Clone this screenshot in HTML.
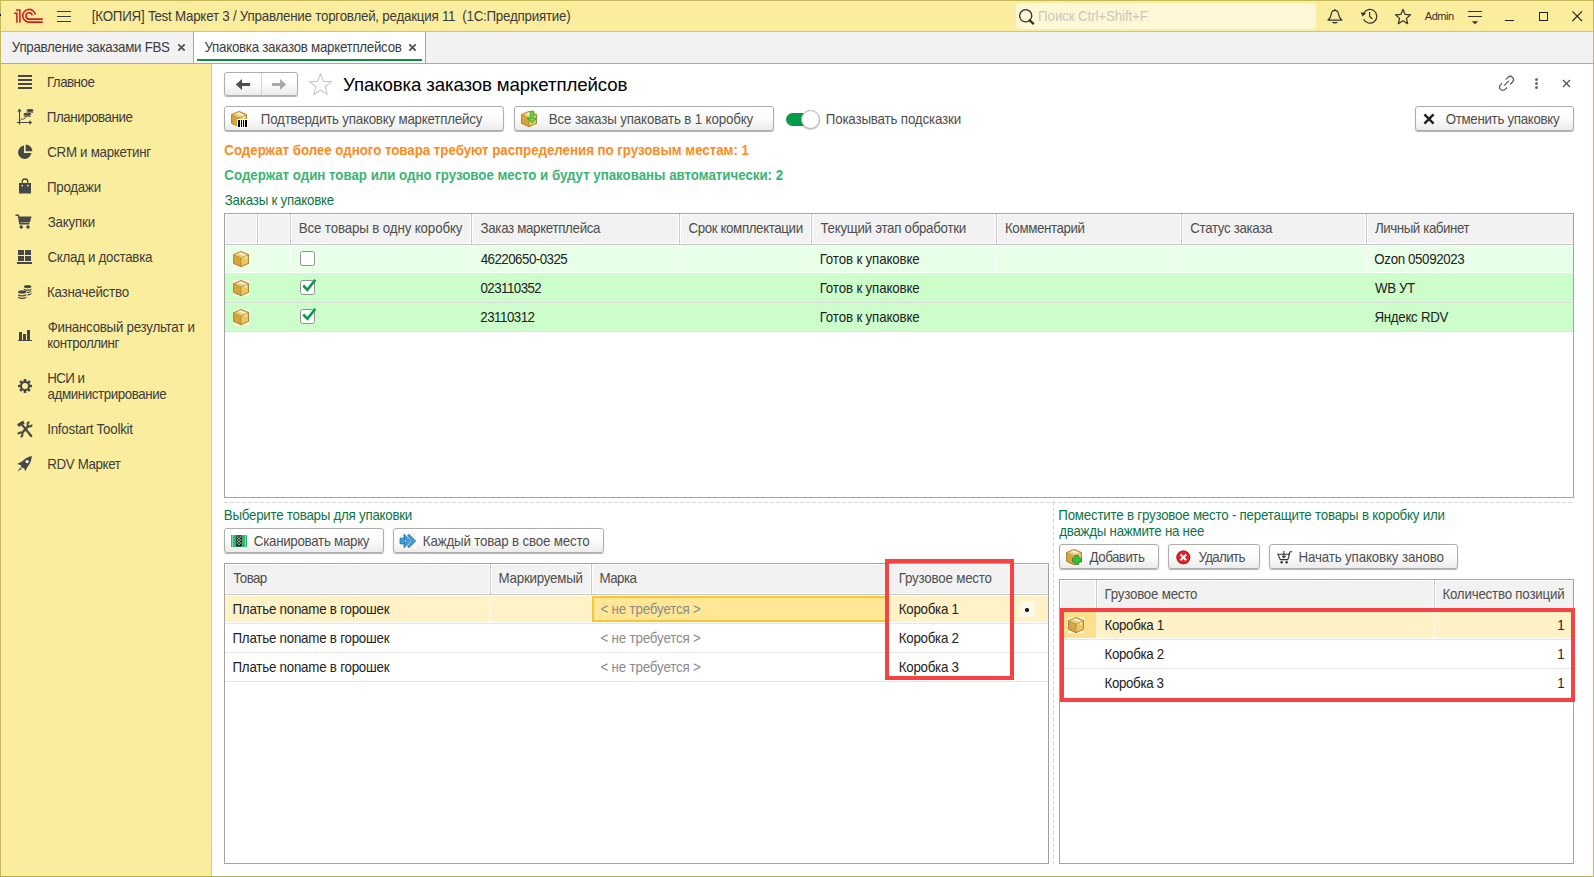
<!DOCTYPE html>
<html lang="ru"><head><meta charset="utf-8"><title>Упаковка заказов маркетплейсов</title>
<style>
*{box-sizing:border-box;margin:0;padding:0}
html,body{width:1594px;height:877px;overflow:hidden;background:#fff}
body{font-family:"Liberation Sans",Arial,sans-serif;font-size:13.33px;color:#333;position:relative}
.abs{position:absolute}
.t{position:absolute;white-space:pre;line-height:16px;height:16px;color:#3c3c3c;transform:scaleY(1.04);transform-origin:0 12.5px}
#frame{position:absolute;left:0;top:0;width:1594px;height:877px;border:1px solid #c4b75c;border-bottom-color:#b9ad52;pointer-events:none;z-index:50}
#titlebar{position:absolute;left:0;top:0;width:1594px;height:32px;background:#fbed9e}
#tabbar{position:absolute;left:0;top:32px;width:1594px;height:32px;background:#f2f2f2;border-bottom:1px solid #a9a9a9}
#sidebar{position:absolute;left:0;top:64px;width:212px;height:813px;background:#fbed9e;border-right:1px solid #d6ca7e}
.btn{position:absolute;height:25px;border:1px solid #adadad;border-radius:3px;background:linear-gradient(#ffffff 0%,#fdfdfd 45%,#ececec 100%);box-shadow:0 1px 1px rgba(0,0,0,.3)}
.grid{position:absolute;border:1px solid #a3a3a3;background:#fff}
.hd{position:absolute;background:#f2f2f2}
.h{color:#4e4e4e}
.g{color:#0b7446}
.gr{color:#8a8a8a}
.ic{position:absolute;overflow:visible}
</style></head><body>

<div id="titlebar"></div>
<div style="position:absolute;left:0px;top:31px;width:1594px;height:1px;background:#d2c574"></div>
<div style="position:absolute;left:0px;top:14.4px;width:1.2px;height:1.7px;background:#111;z-index:60"></div>
<svg class="ic" style="left:0;top:0" width="48" height="32" viewBox="0 0 48 32"><g fill="none" stroke="#d81a1f" stroke-width="1.55"><path d="M16.1 9.95 L19.85 9.95 L19.85 22.7"/><path d="M14.1 13.15 L16.9 13.15 L16.9 22.7"/><path d="M42.8 22.1 L29.1 22.1 A6.35 6.35 0 1 1 35.35 14.65"/><path d="M42.8 19.1 L29.1 19.1 A3.15 3.15 0 1 1 32.2 15.4"/></g></svg>
<div style="position:absolute;left:57px;top:10.75px;width:14px;height:1.4px;background:#3a3a3a"></div>
<div style="position:absolute;left:57px;top:15.7px;width:14px;height:1.4px;background:#3a3a3a"></div>
<div style="position:absolute;left:57px;top:20.7px;width:14px;height:1.4px;background:#3a3a3a"></div>
<div class="t" style="left:91.85px;letter-spacing:-0.223px;top:8.52px;color:#3a3a3a">[КОПИЯ] Test Маркет 3 / Управление торговлей, редакция 11  (1С:Предприятие)</div>
<div style="position:absolute;left:1016px;top:3px;width:300px;height:26px;background:#fff7d5;border-radius:3px"></div>
<svg class="ic" style="left:1018px;top:8px" width="18" height="18" viewBox="0 0 18 18"><circle cx="7.7" cy="7.8" r="6.1" fill="none" stroke="#2e2e2e" stroke-width="1.3"/><path d="M11.6 12.2 L15.2 15.6" stroke="#2e2e2e" stroke-width="2.2" stroke-linecap="round"/></svg>
<div class="t" style="left:1038.12px;letter-spacing:-0.113px;top:8.52px;color:#cbc8bd">Поиск Ctrl+Shift+F</div>
<svg class="ic" style="left:1327px;top:8px" width="16" height="18" viewBox="0 0 16 18"><path d="M1 12.2 C3.2 10.2 4 8.6 4.4 5.6 C4.7 3.3 6 2.3 7.9 2.3 C9.8 2.3 11.1 3.3 11.4 5.6 C11.8 8.6 12.6 10.2 14.9 12.2 Z" fill="none" stroke="#333" stroke-width="1.2" stroke-linejoin="round"/><circle cx="7.9" cy="1.7" r="0.8" fill="#333"/><path d="M4.6 13.9 L11.2 13.9 Q7.9 17.2 4.6 13.9 Z" fill="#333"/></svg>
<svg class="ic" style="left:1360px;top:8px" width="18" height="18" viewBox="0 0 18 18"><path d="M3.65 5.4 A6.9 6.9 0 1 1 3.65 11.2" fill="none" stroke="#333" stroke-width="1.2"/><path d="M2.5 8.4 L0.7 4.3 L6 5.2 Z" fill="#333"/><path d="M9.6 4 L9.6 8.4 L12.5 11" fill="none" stroke="#333" stroke-width="1.2"/></svg>
<svg class="ic" style="left:1394px;top:8px" width="18" height="17" viewBox="0 0 18 17"><path d="M9 1.3 L11.1 6.4 L16.6 6.8 L12.4 10.4 L13.7 15.7 L9 12.8 L4.3 15.7 L5.6 10.4 L1.4 6.8 L6.9 6.4 Z" fill="none" stroke="#333" stroke-width="1.2" stroke-linejoin="round"/></svg>
<div class="t" style="left:1424.78px;letter-spacing:-0.461px;top:9.02px;font-size:11px;line-height:14px;height:14px;transform:none;color:#333">Admin</div>
<div style="position:absolute;left:1467.8px;top:10.9px;width:14.4px;height:1.3px;background:#333"></div>
<div style="position:absolute;left:1467.8px;top:15.7px;width:14.4px;height:1.3px;background:#333"></div>
<svg class="ic" style="left:1471px;top:21px" width="8" height="4" viewBox="0 0 8 4"><path d="M0.8 0.2 L7.2 0.2 L4 3.2 Z" fill="#333"/></svg>
<div style="position:absolute;left:1505.2px;top:19.6px;width:9px;height:1.2px;background:#222"></div>
<div style="position:absolute;left:1539px;top:12px;width:9px;height:9px;border:1.3px solid #222"></div>
<svg class="ic" style="left:1572px;top:11px" width="11" height="11" viewBox="0 0 11 11"><path d="M0.4 0.4 L10 10 M10 0.4 L0.4 10" stroke="#222" stroke-width="1.1"/></svg>
<div id="tabbar"></div>
<div class="t" style="left:11.84px;letter-spacing:-0.286px;top:39.52px;">Управление заказами FBS</div>
<svg class="ic" style="left:177px;top:43px" width="9" height="9" viewBox="0 0 9 9"><path d="M1.3 1.3 L7.7 7.7 M7.7 1.3 L1.3 7.7" stroke="#4d4d4d" stroke-width="1.7"/></svg>
<div style="position:absolute;left:193px;top:32px;width:1px;height:31px;background:#a6a6a6"></div>
<div style="position:absolute;left:194px;top:32px;width:231px;height:31px;background:#fff"></div>
<div style="position:absolute;left:425px;top:32px;width:1px;height:31px;background:#a6a6a6"></div>
<div style="position:absolute;left:197px;top:59px;width:225px;height:2px;background:#0b9040"></div>
<div class="t" style="left:204.54px;letter-spacing:-0.281px;top:39.52px;">Упаковка заказов маркетплейсов</div>
<svg class="ic" style="left:408px;top:43px" width="9" height="9" viewBox="0 0 9 9"><path d="M1.3 1.3 L7.7 7.7 M7.7 1.3 L1.3 7.7" stroke="#4d4d4d" stroke-width="1.7"/></svg>
<div id="sidebar"></div>
<div class="t" style="left:46.91px;letter-spacing:-0.506px;top:74.52px;">Главное</div>
<div class="t" style="left:46.82px;letter-spacing:-0.444px;top:109.52px;">Планирование</div>
<div class="t" style="left:47.22px;letter-spacing:-0.289px;top:144.52px;">CRM и маркетинг</div>
<div class="t" style="left:47.02px;letter-spacing:-0.260px;top:179.52px;">Продажи</div>
<div class="t" style="left:47.66px;letter-spacing:-0.173px;top:214.52px;">Закупки</div>
<div class="t" style="left:47.42px;letter-spacing:-0.286px;top:249.52px;">Склад и доставка</div>
<div class="t" style="left:47.01px;letter-spacing:-0.225px;top:284.52px;">Казначейство</div>
<div class="t" style="left:47.63px;letter-spacing:-0.254px;top:319.52px;">Финансовый результат и</div>
<div class="t" style="left:47.20px;letter-spacing:-0.442px;top:335.52px;">контроллинг</div>
<div class="t" style="left:47.31px;letter-spacing:-0.590px;top:370.52px;">НСИ и</div>
<div class="t" style="left:47.53px;letter-spacing:-0.397px;top:386.52px;">администрирование</div>
<div class="t" style="left:47.17px;letter-spacing:-0.219px;top:421.52px;">Infostart Toolkit</div>
<div class="t" style="left:47.31px;letter-spacing:-0.373px;top:456.52px;">RDV Маркет</div>
<div style="position:absolute;left:18px;top:75px;width:14px;height:2px;background:#474747"></div>
<div style="position:absolute;left:18px;top:79px;width:14px;height:2px;background:#474747"></div>
<div style="position:absolute;left:18px;top:83px;width:14px;height:2px;background:#474747"></div>
<div style="position:absolute;left:18px;top:87px;width:14px;height:2px;background:#474747"></div>
<svg class="ic" style="left:16px;top:108px" width="18" height="18" viewBox="0 0 18 18"><g fill="none" stroke="#474747" stroke-width="1.15"><path d="M3.5 2 L3.5 16.6 M0.9 14.5 L14 14.5"/><path d="M4.6 12.3 L6.4 10.7 L7.6 11.2 L9.8 9.4" stroke-width="1"/></g><path d="M3.5 0.4 L5.7 3.4 L1.3 3.4 Z M16.3 14.5 L13.2 16.7 L13.2 12.3 Z" fill="#474747"/><g fill="#474747"><ellipse cx="14" cy="2.3" rx="3.4" ry="1.25"/><ellipse cx="14" cy="4.1" rx="3.4" ry="1.25"/><ellipse cx="11.3" cy="6" rx="3.8" ry="1.3"/><ellipse cx="11.3" cy="7.8" rx="3.8" ry="1.3"/></g><g fill="none" stroke="#fbed9e" stroke-width="0.55"><path d="M10.6 3.2 A3.4 1.25 0 0 0 17.4 3.2"/><path d="M7.5 6.9 A3.8 1.3 0 0 0 15.1 6.9"/><path d="M10.6 5 A3.4 1.25 0 0 0 12 5.1"/></g></svg>
<svg class="ic" style="left:17px;top:144px" width="16" height="16" viewBox="0 0 16 16"><path d="M7 1.6 A6.7 6.7 0 1 0 14.4 9 L7 9 Z" fill="#474747"/><path d="M8.6 0.6 A6.6 6.6 0 0 1 15.3 7.3 L8.6 7.3 Z" fill="#474747"/></svg>
<svg class="ic" style="left:18px;top:178px" width="14" height="16" viewBox="0 0 14 16"><path d="M1 5 L13 5 L13 15.5 L1 15.5 Z" fill="#474747"/><path d="M4.2 7.5 L4.2 3.8 A2.8 2.8 0 0 1 9.8 3.8 L9.8 7.5" fill="none" stroke="#474747" stroke-width="1.3"/><circle cx="4.2" cy="7.6" r="0.9" fill="#fbed9e"/><circle cx="9.8" cy="7.6" r="0.9" fill="#fbed9e"/></svg>
<svg class="ic" style="left:15.4px;top:214.4px" width="18" height="16" viewBox="0 0 18 16"><path d="M0.5 1.2 L3.4 1.2 L5 9.8 L14.4 9.8" fill="none" stroke="#474747" stroke-width="1.5"/><path d="M4 2.6 L16.6 2.6 L14.8 8.4 L5 8.4 Z" fill="#474747"/><circle cx="6.2" cy="13" r="1.7" fill="#474747"/><circle cx="13" cy="13" r="1.7" fill="#474747"/></svg>
<div style="position:absolute;left:18px;top:250.3px;width:6px;height:4.8px;background:#474747"></div>
<div style="position:absolute;left:25.3px;top:250.3px;width:6px;height:4.8px;background:#474747"></div>
<div style="position:absolute;left:18px;top:256.4px;width:6px;height:4.5px;background:#474747"></div>
<div style="position:absolute;left:25.3px;top:256.4px;width:6px;height:4.5px;background:#474747"></div>
<div style="position:absolute;left:17px;top:262px;width:15px;height:1.8px;background:#474747"></div>
<svg class="ic" style="left:17px;top:284px" width="16" height="16" viewBox="0 0 16 16"><g fill="#474747"><ellipse cx="10.6" cy="2.6" rx="3.8" ry="1.6"/><path d="M6.8 4 A3.8 1.6 0 0 0 14.4 4 L14.4 5.2 A3.8 1.6 0 0 1 6.8 5.2 Z"/><path d="M10 7.8 A3.8 1.6 0 0 0 14.4 6.4 L14.4 7.6 A3.8 1.6 0 0 1 10 9 Z"/><path d="M10.5 10.2 A3.8 1.6 0 0 0 14.4 8.8 L14.4 10 A3.8 1.6 0 0 1 10.5 11.4 Z"/><ellipse cx="5.2" cy="8" rx="4.2" ry="1.7"/><path d="M1 9.5 A4.2 1.7 0 0 0 9.4 9.5 L9.4 10.8 A4.2 1.7 0 0 1 1 10.8 Z"/><path d="M1 12 A4.2 1.7 0 0 0 9.4 12 L9.4 13.3 A4.2 1.7 0 0 1 1 13.3 Z"/></g></svg>
<div style="position:absolute;left:18px;top:339.8px;width:14px;height:1.3px;background:#474747"></div>
<div style="position:absolute;left:19px;top:332.2px;width:3px;height:8px;background:#474747"></div>
<div style="position:absolute;left:23.1px;top:334.2px;width:2.8px;height:6px;background:#474747"></div>
<div style="position:absolute;left:27px;top:330.1px;width:3px;height:10px;background:#474747"></div>
<svg class="ic" style="left:17px;top:377.9px" width="16" height="16" viewBox="0 0 16 16"><g transform="translate(8 8)"><g fill="#474747"><rect x="-1.35" y="-7" width="2.7" height="14" rx="0.5"/><rect x="-1.35" y="-7" width="2.7" height="14" rx="0.5" transform="rotate(45)"/><rect x="-1.35" y="-7" width="2.7" height="14" rx="0.5" transform="rotate(90)"/><rect x="-1.35" y="-7" width="2.7" height="14" rx="0.5" transform="rotate(135)"/><circle r="5"/></g><circle r="3" fill="#fbed9e"/></g></svg>
<svg class="ic" style="left:16px;top:420px" width="18" height="18" viewBox="0 0 18 18"><g stroke="#474747" fill="none"><path d="M6 4.6 L15.2 16" stroke-width="2.3" stroke-linecap="round"/><path d="M1.9 5.6 L7.9 2" stroke-width="3.3"/><path d="M12.4 6 L5.6 13.4" stroke-width="2.3"/><path d="M15.69 4.58 A2.1 2.1 0 1 1 13.42 2.31" stroke-width="1.9"/><path d="M2.31 14.42 A2.1 2.1 0 1 1 4.58 16.69" stroke-width="1.9"/></g></svg>
<svg class="ic" style="left:16px;top:455px" width="18" height="18" viewBox="0 0 18 18"><path d="M15.9 0.9 C12 1.6 8.4 3.6 6.4 6.2 L1.2 9 L5.2 10.2 L4.7 11.2 L6.9 13.4 L7.9 12.8 L9.2 16.2 L11.8 11.4 C14.2 8.8 15.6 5 15.9 0.9 Z" fill="#474747"/><path d="M4.4 12.4 L1.4 16.6 L5.8 13.8 Z" fill="#474747"/><circle cx="11.1" cy="6.6" r="1.6" fill="#fff"/></svg>
<div class="btn" style="left:224px;top:72px;width:74px;height:24px"></div>
<div style="position:absolute;left:261px;top:73px;width:1px;height:22px;background:#d2d2d2"></div>
<svg class="ic" style="left:235px;top:78px" width="16" height="13" viewBox="0 0 16 13"><path d="M0.8 6.5 L7 1.1 L7 5 L15.1 5 L15.1 8 L7 8 L7 11.9 Z" fill="#4f4f4f"/></svg>
<svg class="ic" style="left:271px;top:78px" width="16" height="13" viewBox="0 0 16 13"><path d="M15.2 6.5 L9 1.1 L9 5 L1 5 L1 8 L9 8 L9 11.9 Z" fill="#a9a9a9"/></svg>
<svg class="ic" style="left:308px;top:72px" width="25" height="24" viewBox="0 0 25 24"><path d="M12.5 2 L15.4 9.2 L23.2 9.8 L17.2 14.8 L19.1 22.4 L12.5 18.2 L5.9 22.4 L7.8 14.8 L1.8 9.8 L9.6 9.2 Z" fill="#fff" stroke="#c3c7cc" stroke-width="1.1" stroke-linejoin="miter"/></svg>
<div class="t" style="left:343.10px;letter-spacing:-0.118px;top:73.02px;font-size:18.67px;line-height:23px;height:23px;transform:none;color:#000">Упаковка заказов маркетплейсов</div>
<svg class="ic" style="left:1490px;top:70px" width="28" height="26" viewBox="0 0 28 26"><g fill="none" stroke="#5a5a5a" stroke-width="1.2"><path d="M15.7 9.6 L17.9 7.4 A3.25 3.25 0 0 1 22.5 12 L20 14.5"/><path d="M12.1 13.2 L10.5 14.8 A3.25 3.25 0 0 0 15.1 19.4 L17 17.5"/><path d="M14.1 15.7 L18.9 10.9"/></g></svg>
<div style="position:absolute;left:1535px;top:78px;width:3px;height:3px;background:#6a6a6a;border-radius:50%"></div>
<div style="position:absolute;left:1535px;top:82px;width:3px;height:3px;background:#6a6a6a;border-radius:50%"></div>
<div style="position:absolute;left:1535px;top:86px;width:3px;height:3px;background:#6a6a6a;border-radius:50%"></div>
<svg class="ic" style="left:1562px;top:79px" width="9" height="9" viewBox="0 0 9 9"><path d="M1 1 L8 8 M8 1 L1 8" stroke="#555" stroke-width="1.3"/></svg>
<div class="btn" style="left:224px;top:106px;width:280px"></div>
<svg class="abs" style="left:231px;top:111px" width="16" height="16" viewBox="0 0 16 16"><rect width="16" height="16" fill="#fdf4e4"/><path d="M0.6 3.6 L8 6.9 L8 15.7 L0.6 12.4 Z" fill="#d6a63e"/><path d="M15.5 3.6 L8 6.9 L8 15.7 L15.5 12.4 Z" fill="#ebc65c"/><path d="M8 0.4 L15.5 3.6 L8 6.9 L0.6 3.6 Z" fill="#efd27a"/><path d="M4.4 2 L6.4 1.1 L13.6 4.3 L11.6 5.3 Z" fill="#f8efd8"/><path d="M11.6 5.4 L13.6 4.5 L13.6 7 L12.6 8.1 L11.6 7.5 Z" fill="#f6ecd2"/><g fill="none" stroke="#8f6b1e" stroke-width="0.75" stroke-linejoin="round"><path d="M8 0.4 L15.5 3.6 L15.5 12.4 L8 15.7 L0.6 12.4 L0.6 3.6 Z"/><path d="M0.6 3.6 L8 6.9 L15.5 3.6 M8 6.9 L8 15.7" stroke-width="0.6" stroke="#a27c28"/></g></svg>
<div style="position:absolute;left:237px;top:119px;width:10.6px;height:9px;background:#fffdf6"></div>
<div style="position:absolute;left:238.1px;top:120px;width:1.8px;height:6.8px;background:#000"></div>
<div style="position:absolute;left:241px;top:120px;width:1px;height:6.8px;background:#000"></div>
<div style="position:absolute;left:243px;top:120px;width:1px;height:6.8px;background:#000"></div>
<div style="position:absolute;left:245.3px;top:120px;width:1.8px;height:6.8px;background:#000"></div>
<div class="t h" style="left:260.82px;letter-spacing:-0.214px;top:111.52px;">Подтвердить упаковку маркетплейсу</div>
<div class="btn" style="left:514px;top:106px;width:260px"></div>
<svg class="abs" style="left:521px;top:111px" width="16" height="16" viewBox="0 0 16 16"><rect width="16" height="16" fill="#fdf4e4"/><path d="M0.6 3.6 L8 6.9 L8 15.7 L0.6 12.4 Z" fill="#d6a63e"/><path d="M15.5 3.6 L8 6.9 L8 15.7 L15.5 12.4 Z" fill="#ebc65c"/><path d="M8 0.4 L15.5 3.6 L8 6.9 L0.6 3.6 Z" fill="#efd27a"/><path d="M4.4 2 L6.4 1.1 L13.6 4.3 L11.6 5.3 Z" fill="#f8efd8"/><path d="M11.6 5.4 L13.6 4.5 L13.6 7 L12.6 8.1 L11.6 7.5 Z" fill="#f6ecd2"/><g fill="none" stroke="#8f6b1e" stroke-width="0.75" stroke-linejoin="round"><path d="M8 0.4 L15.5 3.6 L15.5 12.4 L8 15.7 L0.6 12.4 L0.6 3.6 Z"/><path d="M0.6 3.6 L8 6.9 L15.5 3.6 M8 6.9 L8 15.7" stroke-width="0.6" stroke="#a27c28"/></g></svg>
<svg class="ic" style="left:526px;top:110px" width="12" height="14" viewBox="0 0 12 14"><path d="M4.3 1.2 L7.7 1.2 L7.7 8.4 L10.6 8.4 L6 12.6 L1.2 8.4 L4.3 8.4 Z" fill="#66d544" stroke="#2f9e22" stroke-width="0.8" stroke-linejoin="round"/></svg>
<div class="t h" style="left:548.81px;letter-spacing:-0.143px;top:111.52px;">Все заказы упаковать в 1 коробку</div>
<div style="position:absolute;left:786px;top:113px;width:28px;height:13px;background:#059a48;border-radius:6.5px"></div>
<div style="position:absolute;left:801.4px;top:110.2px;width:18.8px;height:18.8px;background:#fff;border:1px solid #b2b2b2;border-radius:50%;box-shadow:0 1px 1px rgba(0,0,0,.22)"></div>
<div class="t h" style="left:825.72px;letter-spacing:-0.159px;top:111.52px;">Показывать подсказки</div>
<div class="btn" style="left:1415px;top:106px;width:159px"></div>
<svg class="ic" style="left:1423px;top:113px" width="12" height="12" viewBox="0 0 12 12"><path d="M1.4 1.4 L10.6 10.6 M10.6 1.4 L1.4 10.6" stroke="#1e1e1e" stroke-width="2.4"/></svg>
<div class="t h" style="left:1445.67px;letter-spacing:-0.316px;top:111.52px;">Отменить упаковку</div>
<div class="t" style="left:224.35px;letter-spacing:-0.037px;top:142.52px;font-weight:bold;color:#ff8a1c">Содержат более одного товара требуют распределения по грузовым местам: 1</div>
<div class="t" style="left:224.35px;letter-spacing:-0.026px;top:167.52px;font-weight:bold;color:#3cb474">Содержат один товар или одно грузовое место и будут упакованы автоматически: 2</div>
<div class="t g" style="left:224.76px;letter-spacing:-0.213px;top:192.52px;">Заказы к упаковке</div>
<div class="grid" style="left:224px;top:213px;width:1350px;height:285px"></div>
<div style="position:absolute;left:226px;top:215px;width:1347px;height:28px;background:#f2f2f2"></div>
<div style="position:absolute;left:225px;top:244px;width:1348px;height:1px;background:#c6c6c6"></div>
<div style="position:absolute;left:256px;top:214px;width:3px;height:30px;background:#fff"></div>
<div style="position:absolute;left:257px;top:214px;width:1px;height:31px;background:#c9c9c9"></div>
<div style="position:absolute;left:289px;top:214px;width:3px;height:30px;background:#fff"></div>
<div style="position:absolute;left:290px;top:214px;width:1px;height:31px;background:#c9c9c9"></div>
<div style="position:absolute;left:470px;top:214px;width:3px;height:30px;background:#fff"></div>
<div style="position:absolute;left:471px;top:214px;width:1px;height:31px;background:#c9c9c9"></div>
<div style="position:absolute;left:678px;top:214px;width:3px;height:30px;background:#fff"></div>
<div style="position:absolute;left:679px;top:214px;width:1px;height:31px;background:#c9c9c9"></div>
<div style="position:absolute;left:810px;top:214px;width:3px;height:30px;background:#fff"></div>
<div style="position:absolute;left:811px;top:214px;width:1px;height:31px;background:#c9c9c9"></div>
<div style="position:absolute;left:995px;top:214px;width:3px;height:30px;background:#fff"></div>
<div style="position:absolute;left:996px;top:214px;width:1px;height:31px;background:#c9c9c9"></div>
<div style="position:absolute;left:1180px;top:214px;width:3px;height:30px;background:#fff"></div>
<div style="position:absolute;left:1181px;top:214px;width:1px;height:31px;background:#c9c9c9"></div>
<div style="position:absolute;left:1365px;top:214px;width:3px;height:30px;background:#fff"></div>
<div style="position:absolute;left:1366px;top:214px;width:1px;height:31px;background:#c9c9c9"></div>
<div style="position:absolute;left:225px;top:246px;width:1348px;height:26px;background:#e8ffe8"></div>
<div style="position:absolute;left:225px;top:274px;width:1348px;height:28px;background:#ccfdcb"></div>
<div style="position:absolute;left:225px;top:303px;width:1348px;height:28px;background:#ccfdcb"></div>
<div style="position:absolute;left:225px;top:273px;width:1348px;height:1px;background:#e9ece9"></div>
<div style="position:absolute;left:225px;top:302px;width:1348px;height:1px;background:#dcdedc"></div>
<div style="position:absolute;left:225px;top:331px;width:1348px;height:1px;background:#e2e2e2"></div>
<div style="position:absolute;left:257px;top:246px;width:1px;height:26px;background:#fcfffc"></div>
<div style="position:absolute;left:290px;top:246px;width:1px;height:26px;background:#fcfffc"></div>
<div style="position:absolute;left:471px;top:246px;width:1px;height:26px;background:#fcfffc"></div>
<div style="position:absolute;left:679px;top:246px;width:1px;height:26px;background:#fcfffc"></div>
<div style="position:absolute;left:811px;top:246px;width:1px;height:26px;background:#fcfffc"></div>
<div style="position:absolute;left:996px;top:246px;width:1px;height:26px;background:#fcfffc"></div>
<div style="position:absolute;left:1181px;top:246px;width:1px;height:26px;background:#fcfffc"></div>
<div style="position:absolute;left:1366px;top:246px;width:1px;height:26px;background:#fcfffc"></div>
<div class="t h" style="left:298.71px;letter-spacing:-0.136px;top:220.52px;">Все товары в одну коробку</div>
<div class="t h" style="left:480.56px;letter-spacing:-0.335px;top:220.52px;">Заказ маркетплейса</div>
<div class="t h" style="left:688.42px;letter-spacing:-0.382px;top:220.52px;">Срок комплектации</div>
<div class="t h" style="left:820.50px;letter-spacing:-0.290px;top:220.52px;">Текущий этап обработки</div>
<div class="t h" style="left:1005.01px;letter-spacing:-0.393px;top:220.52px;">Комментарий</div>
<div class="t h" style="left:1190.32px;letter-spacing:-0.349px;top:220.52px;">Статус заказа</div>
<div class="t h" style="left:1374.88px;letter-spacing:-0.418px;top:220.52px;">Личный кабинет</div>
<svg class="abs" style="left:233px;top:251px" width="16" height="16" viewBox="0 0 16 16"><rect width="16" height="16" fill="#fdf4e4"/><path d="M0.6 3.6 L8 6.9 L8 15.7 L0.6 12.4 Z" fill="#d6a63e"/><path d="M15.5 3.6 L8 6.9 L8 15.7 L15.5 12.4 Z" fill="#ebc65c"/><path d="M8 0.4 L15.5 3.6 L8 6.9 L0.6 3.6 Z" fill="#efd27a"/><path d="M4.4 2 L6.4 1.1 L13.6 4.3 L11.6 5.3 Z" fill="#f8efd8"/><path d="M11.6 5.4 L13.6 4.5 L13.6 7 L12.6 8.1 L11.6 7.5 Z" fill="#f6ecd2"/><g fill="none" stroke="#8f6b1e" stroke-width="0.75" stroke-linejoin="round"><path d="M8 0.4 L15.5 3.6 L15.5 12.4 L8 15.7 L0.6 12.4 L0.6 3.6 Z"/><path d="M0.6 3.6 L8 6.9 L15.5 3.6 M8 6.9 L8 15.7" stroke-width="0.6" stroke="#a27c28"/></g></svg>
<div style="position:absolute;left:300px;top:251px;width:15px;height:15px;background:#fff;border:1px solid #929292;border-radius:2.5px"></div>
<div class="t" style="left:480.69px;letter-spacing:-0.527px;top:251.52px;color:#222">46220650-0325</div>
<div class="t" style="left:819.71px;letter-spacing:-0.154px;top:251.52px;color:#222">Готов к упаковке</div>
<div class="t" style="left:1374.37px;letter-spacing:-0.378px;top:251.52px;color:#222">Ozon 05092023</div>
<svg class="abs" style="left:233px;top:280px" width="16" height="16" viewBox="0 0 16 16"><rect width="16" height="16" fill="#fdf4e4"/><path d="M0.6 3.6 L8 6.9 L8 15.7 L0.6 12.4 Z" fill="#d6a63e"/><path d="M15.5 3.6 L8 6.9 L8 15.7 L15.5 12.4 Z" fill="#ebc65c"/><path d="M8 0.4 L15.5 3.6 L8 6.9 L0.6 3.6 Z" fill="#efd27a"/><path d="M4.4 2 L6.4 1.1 L13.6 4.3 L11.6 5.3 Z" fill="#f8efd8"/><path d="M11.6 5.4 L13.6 4.5 L13.6 7 L12.6 8.1 L11.6 7.5 Z" fill="#f6ecd2"/><g fill="none" stroke="#8f6b1e" stroke-width="0.75" stroke-linejoin="round"><path d="M8 0.4 L15.5 3.6 L15.5 12.4 L8 15.7 L0.6 12.4 L0.6 3.6 Z"/><path d="M0.6 3.6 L8 6.9 L15.5 3.6 M8 6.9 L8 15.7" stroke-width="0.6" stroke="#a27c28"/></g></svg>
<div style="position:absolute;left:300px;top:280px;width:15px;height:15px;background:#fff;border:1px solid #929292;border-radius:2.5px"></div>
<svg class="ic" style="left:301px;top:276px" width="16" height="16" viewBox="0 0 16 16"><path d="M2.2 9.5 L6.4 13.8 L14.3 3.7" fill="none" stroke="#0b9a48" stroke-width="2.6" stroke-linejoin="miter"/></svg>
<div class="t" style="left:480.48px;letter-spacing:-0.554px;top:280.52px;color:#222">023110352</div>
<div class="t" style="left:819.71px;letter-spacing:-0.154px;top:280.52px;color:#222">Готов к упаковке</div>
<div class="t" style="left:1374.94px;letter-spacing:-0.379px;top:280.52px;color:#222">WB УТ</div>
<svg class="abs" style="left:233px;top:309px" width="16" height="16" viewBox="0 0 16 16"><rect width="16" height="16" fill="#fdf4e4"/><path d="M0.6 3.6 L8 6.9 L8 15.7 L0.6 12.4 Z" fill="#d6a63e"/><path d="M15.5 3.6 L8 6.9 L8 15.7 L15.5 12.4 Z" fill="#ebc65c"/><path d="M8 0.4 L15.5 3.6 L8 6.9 L0.6 3.6 Z" fill="#efd27a"/><path d="M4.4 2 L6.4 1.1 L13.6 4.3 L11.6 5.3 Z" fill="#f8efd8"/><path d="M11.6 5.4 L13.6 4.5 L13.6 7 L12.6 8.1 L11.6 7.5 Z" fill="#f6ecd2"/><g fill="none" stroke="#8f6b1e" stroke-width="0.75" stroke-linejoin="round"><path d="M8 0.4 L15.5 3.6 L15.5 12.4 L8 15.7 L0.6 12.4 L0.6 3.6 Z"/><path d="M0.6 3.6 L8 6.9 L15.5 3.6 M8 6.9 L8 15.7" stroke-width="0.6" stroke="#a27c28"/></g></svg>
<div style="position:absolute;left:300px;top:309px;width:15px;height:15px;background:#fff;border:1px solid #929292;border-radius:2.5px"></div>
<svg class="ic" style="left:301px;top:305px" width="16" height="16" viewBox="0 0 16 16"><path d="M2.2 9.5 L6.4 13.8 L14.3 3.7" fill="none" stroke="#0b9a48" stroke-width="2.6" stroke-linejoin="miter"/></svg>
<div class="t" style="left:480.33px;letter-spacing:-0.524px;top:309.52px;color:#222">23110312</div>
<div class="t" style="left:819.71px;letter-spacing:-0.154px;top:309.52px;color:#222">Готов к упаковке</div>
<div class="t" style="left:1374.38px;letter-spacing:-0.287px;top:309.52px;color:#222">Яндекс RDV</div>
<div style="position:absolute;left:224px;top:502px;width:1348px;height:1px;background:repeating-linear-gradient(90deg,#d6d6d6 0 4px,transparent 4px 6px)"></div>
<div style="position:absolute;left:1053px;top:501px;width:1px;height:363px;background:repeating-linear-gradient(180deg,#d6d6d6 0 4px,transparent 4px 6px)"></div>
<div class="t g" style="left:223.81px;letter-spacing:-0.248px;top:507.52px;">Выберите товары для упаковки</div>
<div class="btn" style="left:224px;top:528px;width:160px"></div>
<svg class="ic" style="left:231px;top:535px" width="16" height="12" viewBox="0 0 16 12"><rect x="0" y="0" width="16" height="12" fill="#2fb56c"/><g fill="#8fe0b2"><rect x="1.2" y="0" width="0.9" height="12"/><rect x="13.9" y="0" width="0.9" height="12"/></g><rect x="5.4" y="0.6" width="5.2" height="10.8" fill="#111"/><g fill="#fff"><rect x="6.2" y="1.4" width="1.2" height="1.2"/><rect x="8.6" y="1.4" width="1.2" height="1.2"/><rect x="7.4" y="2.9" width="1.2" height="1.2"/><rect x="6.2" y="4.4" width="1.2" height="1.2"/><rect x="8.6" y="4.4" width="1.2" height="1.2"/><rect x="7.4" y="5.9" width="1.2" height="1.2"/><rect x="6.2" y="7.4" width="1.2" height="1.2"/><rect x="8.6" y="7.4" width="1.2" height="1.2"/><rect x="7.4" y="8.9" width="1.2" height="1.2"/></g></svg>
<div class="t h" style="left:253.82px;letter-spacing:-0.283px;top:533.52px;">Сканировать марку</div>
<div class="btn" style="left:393px;top:528px;width:211px"></div>
<div style="position:absolute;left:400px;top:533px;width:16px;height:16px;background:#fdf6e6"></div>
<svg class="ic" style="left:399px;top:533px" width="18" height="16" viewBox="0 0 18 16"><g fill="#3aa0de" stroke="#1a6fb0" stroke-width="0.8" stroke-linejoin="round"><path d="M1 5.2 L5.6 5.2 L5.6 10.8 L1 10.8 Z"/><path d="M5 1.2 L11.6 8 L5 14.8 L5 11 L7.8 8 L5 5 Z" /><path d="M10 1.2 L16.6 8 L10 14.8 L8.6 13.2 L13.2 8 L8.6 2.8 Z"/></g></svg>
<div class="t h" style="left:422.81px;letter-spacing:-0.170px;top:533.52px;">Каждый товар в свое место</div>
<div class="grid" style="left:224px;top:563px;width:825px;height:301px"></div>
<div style="position:absolute;left:226px;top:565px;width:822px;height:28px;background:#f2f2f2"></div>
<div style="position:absolute;left:225px;top:594px;width:823px;height:1px;background:#c6c6c6"></div>
<div style="position:absolute;left:489px;top:564px;width:3px;height:30px;background:#fff"></div>
<div style="position:absolute;left:490px;top:564px;width:1px;height:31px;background:#c9c9c9"></div>
<div style="position:absolute;left:590px;top:564px;width:3px;height:30px;background:#fff"></div>
<div style="position:absolute;left:591px;top:564px;width:1px;height:31px;background:#c9c9c9"></div>
<div style="position:absolute;left:887px;top:564px;width:3px;height:30px;background:#fff"></div>
<div style="position:absolute;left:888px;top:564px;width:1px;height:31px;background:#c9c9c9"></div>
<div style="position:absolute;left:1009px;top:564px;width:3px;height:30px;background:#fff"></div>
<div style="position:absolute;left:1010px;top:564px;width:1px;height:31px;background:#c9c9c9"></div>
<div style="position:absolute;left:225px;top:596px;width:823px;height:26px;background:#fff2c6"></div>
<div style="position:absolute;left:490px;top:596px;width:1px;height:26px;background:#fffcee"></div>
<div style="position:absolute;left:591px;top:596px;width:1px;height:26px;background:#fffcee"></div>
<div style="position:absolute;left:888px;top:596px;width:1px;height:26px;background:#fffcee"></div>
<div style="position:absolute;left:1010px;top:596px;width:1px;height:26px;background:#fffcee"></div>
<div style="position:absolute;left:592px;top:596px;width:297px;height:26px;background:#ffe796;border:2px solid #f9c632"></div>
<div style="position:absolute;left:1019px;top:601px;width:16px;height:16px;background:#fdf9e8"></div>
<div style="position:absolute;left:1025.3px;top:608.2px;width:3.4px;height:3.4px;background:#111;border-radius:50%"></div>
<div style="position:absolute;left:225px;top:623px;width:823px;height:1px;background:#e3e5e6"></div>
<div style="position:absolute;left:225px;top:652px;width:823px;height:1px;background:#e3e5e6"></div>
<div style="position:absolute;left:225px;top:681px;width:823px;height:1px;background:#e3e5e6"></div>
<div class="t h" style="left:233.30px;letter-spacing:-0.577px;top:570.52px;">Товар</div>
<div class="t h" style="left:498.51px;letter-spacing:-0.221px;top:570.52px;">Маркируемый</div>
<div class="t h" style="left:599.41px;letter-spacing:-0.530px;top:570.52px;">Марка</div>
<div class="t h" style="left:898.81px;letter-spacing:-0.206px;top:570.52px;">Грузовое место</div>
<div class="t" style="left:232.52px;letter-spacing:-0.228px;top:601.52px;color:#222">Платье noname в горошек</div>
<div class="t gr" style="left:600.44px;letter-spacing:-0.165px;top:601.52px;">&lt; не требуется &gt;</div>
<div class="t" style="left:898.81px;letter-spacing:-0.268px;top:601.52px;color:#222">Коробка 1</div>
<div class="t" style="left:232.52px;letter-spacing:-0.228px;top:630.52px;color:#222">Платье noname в горошек</div>
<div class="t gr" style="left:600.44px;letter-spacing:-0.165px;top:630.52px;">&lt; не требуется &gt;</div>
<div class="t" style="left:898.81px;letter-spacing:-0.265px;top:630.52px;color:#222">Коробка 2</div>
<div class="t" style="left:232.52px;letter-spacing:-0.228px;top:659.52px;color:#222">Платье noname в горошек</div>
<div class="t gr" style="left:600.44px;letter-spacing:-0.165px;top:659.52px;">&lt; не требуется &gt;</div>
<div class="t" style="left:898.81px;letter-spacing:-0.276px;top:659.52px;color:#222">Коробка 3</div>
<div style="position:absolute;left:885px;top:559px;width:129.3px;height:121px;border:4px solid #f64242"></div>
<div class="t g" style="left:1058.32px;letter-spacing:-0.221px;top:507.52px;">Поместите в грузовое место - перетащите товары в коробку или</div>
<div class="t g" style="left:1059.27px;letter-spacing:-0.255px;top:523.52px;">дважды нажмите на нее</div>
<div class="btn" style="left:1059px;top:544px;width:100px"></div>
<svg class="abs" style="left:1066px;top:549px" width="16" height="16" viewBox="0 0 16 16"><rect width="16" height="16" fill="#fdf4e4"/><path d="M0.6 3.6 L8 6.9 L8 15.7 L0.6 12.4 Z" fill="#d6a63e"/><path d="M15.5 3.6 L8 6.9 L8 15.7 L15.5 12.4 Z" fill="#ebc65c"/><path d="M8 0.4 L15.5 3.6 L8 6.9 L0.6 3.6 Z" fill="#efd27a"/><path d="M4.4 2 L6.4 1.1 L13.6 4.3 L11.6 5.3 Z" fill="#f8efd8"/><path d="M11.6 5.4 L13.6 4.5 L13.6 7 L12.6 8.1 L11.6 7.5 Z" fill="#f6ecd2"/><g fill="none" stroke="#8f6b1e" stroke-width="0.75" stroke-linejoin="round"><path d="M8 0.4 L15.5 3.6 L15.5 12.4 L8 15.7 L0.6 12.4 L0.6 3.6 Z"/><path d="M0.6 3.6 L8 6.9 L15.5 3.6 M8 6.9 L8 15.7" stroke-width="0.6" stroke="#a27c28"/></g></svg>
<svg class="ic" style="left:1072.4px;top:555px" width="10" height="10" viewBox="0 0 10 10"><path d="M3.2 0.5 L6.8 0.5 L6.8 3.2 L9.5 3.2 L9.5 6.8 L6.8 6.8 L6.8 9.5 L3.2 9.5 L3.2 6.8 L0.5 6.8 L0.5 3.2 L3.2 3.2 Z" fill="#2cc53b" stroke="#14802a" stroke-width="0.7"/></svg>
<div class="t h" style="left:1089.60px;letter-spacing:-0.523px;top:549.52px;">Добавить</div>
<div class="btn" style="left:1168px;top:544px;width:92px"></div>
<svg class="ic" style="left:1175.8px;top:549.5px" width="14.7" height="14.7" viewBox="0 0 14 14"><circle cx="7" cy="7" r="6.6" fill="#e0252a"/><circle cx="7" cy="7" r="6.1" fill="none" stroke="#b51419" stroke-width="0.8"/><path d="M4.3 4.3 L9.7 9.7 M9.7 4.3 L4.3 9.7" stroke="#fff" stroke-width="1.9"/></svg>
<div class="t h" style="left:1198.44px;letter-spacing:-0.647px;top:549.52px;">Удалить</div>
<div class="btn" style="left:1269px;top:544px;width:189px"></div>
<svg class="ic" style="left:1276.6px;top:549.8px" width="15.8" height="14.9" viewBox="0 0 17 16"><g fill="none" stroke="#333" stroke-width="1.2"><path d="M1 4.6 L13.4 4.6 L11.6 10.4 L3.6 10.4 Z"/><path d="M7.4 1 L7.4 8 M5.4 6.4 L7.4 8.4 L9.4 6.4"/><path d="M12.6 5 L14 1.8 L16.4 1.8"/></g><circle cx="5" cy="13.2" r="1.3" fill="#333"/><circle cx="10.4" cy="13.2" r="1.3" fill="#333"/></svg>
<div class="t h" style="left:1298.51px;letter-spacing:-0.141px;top:549.52px;">Начать упаковку заново</div>
<div class="grid" style="left:1059px;top:579px;width:515px;height:285px"></div>
<div style="position:absolute;left:1061px;top:581px;width:512px;height:28px;background:#f2f2f2"></div>
<div style="position:absolute;left:1095px;top:580px;width:3px;height:30px;background:#fff"></div>
<div style="position:absolute;left:1096px;top:580px;width:1px;height:30px;background:#c9c9c9"></div>
<div style="position:absolute;left:1433px;top:580px;width:3px;height:30px;background:#fff"></div>
<div style="position:absolute;left:1434px;top:580px;width:1px;height:30px;background:#c9c9c9"></div>
<div style="position:absolute;left:1060px;top:612px;width:513px;height:26px;background:#fff2c6"></div>
<div style="position:absolute;left:1060px;top:612px;width:36px;height:26px;background:#fee08c"></div>
<div style="position:absolute;left:1434px;top:612px;width:1px;height:26px;background:#fffcee"></div>
<div style="position:absolute;left:1096px;top:612px;width:1px;height:26px;background:#fff6d8"></div>
<div style="position:absolute;left:1060px;top:639px;width:513px;height:1px;background:#e3e5e6"></div>
<div style="position:absolute;left:1060px;top:668px;width:513px;height:1px;background:#e3e5e6"></div>
<svg class="abs" style="left:1068px;top:617px" width="16" height="16" viewBox="0 0 16 16"><rect width="16" height="16" fill="#fdf4e4"/><path d="M0.6 3.6 L8 6.9 L8 15.7 L0.6 12.4 Z" fill="#d6a63e"/><path d="M15.5 3.6 L8 6.9 L8 15.7 L15.5 12.4 Z" fill="#ebc65c"/><path d="M8 0.4 L15.5 3.6 L8 6.9 L0.6 3.6 Z" fill="#efd27a"/><path d="M4.4 2 L6.4 1.1 L13.6 4.3 L11.6 5.3 Z" fill="#f8efd8"/><path d="M11.6 5.4 L13.6 4.5 L13.6 7 L12.6 8.1 L11.6 7.5 Z" fill="#f6ecd2"/><g fill="none" stroke="#8f6b1e" stroke-width="0.75" stroke-linejoin="round"><path d="M8 0.4 L15.5 3.6 L15.5 12.4 L8 15.7 L0.6 12.4 L0.6 3.6 Z"/><path d="M0.6 3.6 L8 6.9 L15.5 3.6 M8 6.9 L8 15.7" stroke-width="0.6" stroke="#a27c28"/></g></svg>
<div class="t h" style="left:1104.51px;letter-spacing:-0.222px;top:586.52px;">Грузовое место</div>
<div class="t h" style="left:1442.41px;letter-spacing:-0.213px;top:586.52px;">Количество позиций</div>
<div class="t" style="left:1104.51px;letter-spacing:-0.343px;top:617.52px;color:#222">Коробка 1</div>
<div class="t" style="right:29.35px;top:617.52px;color:#222">1</div>
<div class="t" style="left:1104.51px;letter-spacing:-0.340px;top:646.52px;color:#222">Коробка 2</div>
<div class="t" style="right:29.35px;top:646.52px;color:#222">1</div>
<div class="t" style="left:1104.51px;letter-spacing:-0.351px;top:675.52px;color:#222">Коробка 3</div>
<div class="t" style="right:29.35px;top:675.52px;color:#222">1</div>
<div style="position:absolute;left:1060px;top:608px;width:515px;height:93.5px;border:4px solid #f64242"></div>
<div id="frame"></div>
</body></html>
